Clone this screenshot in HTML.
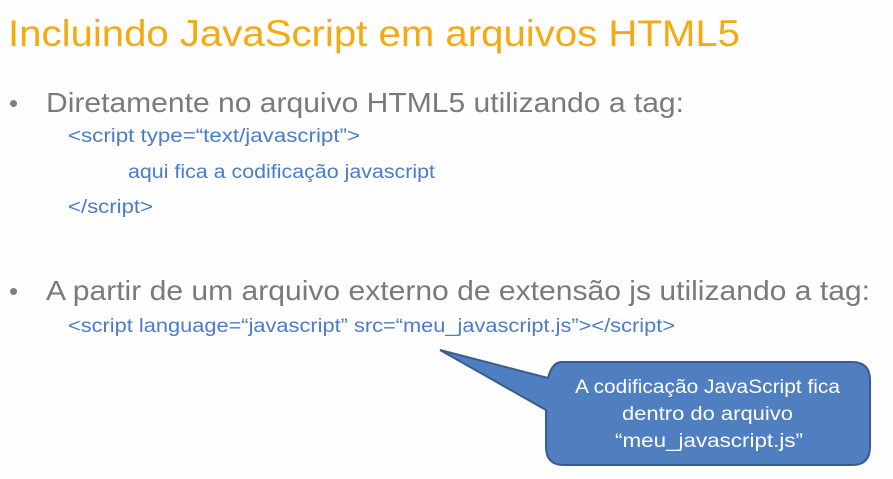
<!DOCTYPE html>
<html><head><meta charset="utf-8"><style>html,body{margin:0;padding:0;background:#fff;}svg{display:block}</style></head>
<body>
<svg width="893" height="479" viewBox="0 0 893 479" xmlns="http://www.w3.org/2000/svg">
<rect width="893" height="479" fill="#fefefe"/>
<g font-family="Liberation Sans, sans-serif">
<text x="8" y="46" font-size="37" fill="#f5aa12" textLength="732" lengthAdjust="spacingAndGlyphs">Incluindo JavaScript em arquivos HTML5</text>
<text x="9" y="112" font-size="26" fill="#7f7f7f">•</text>
<text x="46" y="112" font-size="28" fill="#7a7a7a" textLength="638" lengthAdjust="spacingAndGlyphs">Diretamente no arquivo HTML5 utilizando a tag:</text>
<text x="9" y="300" font-size="26" fill="#7f7f7f">•</text>
<text x="46" y="300" font-size="28" fill="#7a7a7a" textLength="824" lengthAdjust="spacingAndGlyphs">A partir de um arquivo externo de extensão js utilizando a tag:</text>
</g>
<g font-family="Liberation Sans, sans-serif" font-size="19" fill="#4a7cc9">
<text x="68" y="142" textLength="292" lengthAdjust="spacingAndGlyphs">&lt;script type=“text/javascript”&gt;</text>
<text x="128" y="178" textLength="307" lengthAdjust="spacingAndGlyphs">aqui fica a codificação javascript</text>
<text x="68" y="213" textLength="85" lengthAdjust="spacingAndGlyphs">&lt;/script&gt;</text>
<text x="68" y="332" textLength="607" lengthAdjust="spacingAndGlyphs">&lt;script language=“javascript” src=“meu_javascript.js”&gt;&lt;/script&gt;</text>
</g>
<path d="M562,362 H852 Q870,362 870,380 V447 Q870,465 852,465 H564 Q546,465 546,447 V410 L440,350 L548,378 Q552,362 562,362 Z" fill="#4f7fc0" stroke="#385d8a" stroke-width="2"/>
<g font-family="Liberation Sans, sans-serif" font-size="19" fill="#ffffff">
<text x="575" y="393" textLength="265" lengthAdjust="spacingAndGlyphs">A codificação JavaScript fica</text>
<text x="622" y="420" textLength="171" lengthAdjust="spacingAndGlyphs">dentro do arquivo</text>
<text x="615" y="447" textLength="188" lengthAdjust="spacingAndGlyphs">“meu_javascript.js”</text>
</g>
</svg>
</body></html>
